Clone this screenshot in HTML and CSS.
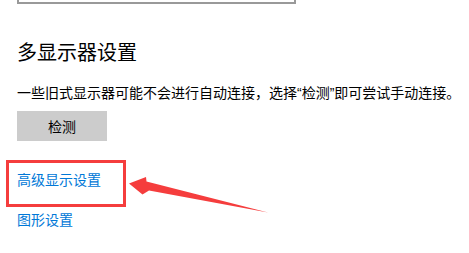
FILE: index.html
```html
<!DOCTYPE html>
<html lang="zh-CN">
<head>
<meta charset="utf-8">
<link rel="stylesheet" href="styles.css">
</head>
<body>
<div class="page">
  <div class="dropdown-tail"></div>
  <h2 class="heading">多显示器设置</h2>
  <p class="desc">一些旧式显示器可能不会进行自动连接，选择<span class="q">“</span>检测<span class="q">”</span>即可尝试手动连接。</p>
  <button class="detect">检测</button>
  <div class="links">
    <div class="link-row highlighted">
      <a class="link" href="#">高级显示设置</a>
      <span class="mark"></span>
    </div>
    <div class="link-row">
      <a class="link" href="#">图形设置</a>
    </div>
  </div>
  <svg class="arrow" width="469" height="253" viewBox="0 0 469 253">
    <polygon points="129,183.5 146,177 146.5,181.5 268,212.5 149,190.5 142.5,194.5" fill="#f53d3d"/>
  </svg>
</div>
</body>
</html>
```
FILE: styles.css
```css
html, body {
  margin: 0;
  padding: 0;
  background: #ffffff;
}
body {
  font-family: "Noto Sans CJK SC", "Noto Sans", sans-serif;
  color: #000000;
}
.page {
  position: relative;
  width: 469px;
  height: 253px;
  overflow: hidden;
  padding-left: 17px;
  box-sizing: border-box;
}
.dropdown-tail {
  width: 275px;
  height: 2px;
  border: 2px solid #999999;
  border-top: none;
}
.heading {
  margin: 34px 0 0 0;
  font-size: 20px;
  font-weight: 400;
  line-height: 28px;
}
.desc {
  margin: 16px 0 0 0;
  font-size: 14px;
  line-height: 20px;
  white-space: nowrap;
}
.q {
  font-family: "Liberation Sans", sans-serif;
}
.detect {
  display: block;
  margin-top: 8px;
  width: 90px;
  height: 30px;
  border: none;
  background: #cccccc;
  font-family: inherit;
  font-size: 14px;
  color: #000000;
  padding: 0;
}
.links {
  margin-top: 27px;
  display: flex;
  flex-direction: column;
  gap: 20px;
}
.link-row {
  position: relative;
  line-height: 20px;
  height: 20px;
}
.link {
  font-size: 14px;
  color: #0078d7;
  text-decoration: none;
}
.mark {
  position: absolute;
  left: -11px;
  top: -8px;
  width: 114px;
  height: 41px;
  border: 3px solid #f53d3d;
}
.arrow {
  position: absolute;
  left: 0;
  top: 0;
  pointer-events: none;
}
```
